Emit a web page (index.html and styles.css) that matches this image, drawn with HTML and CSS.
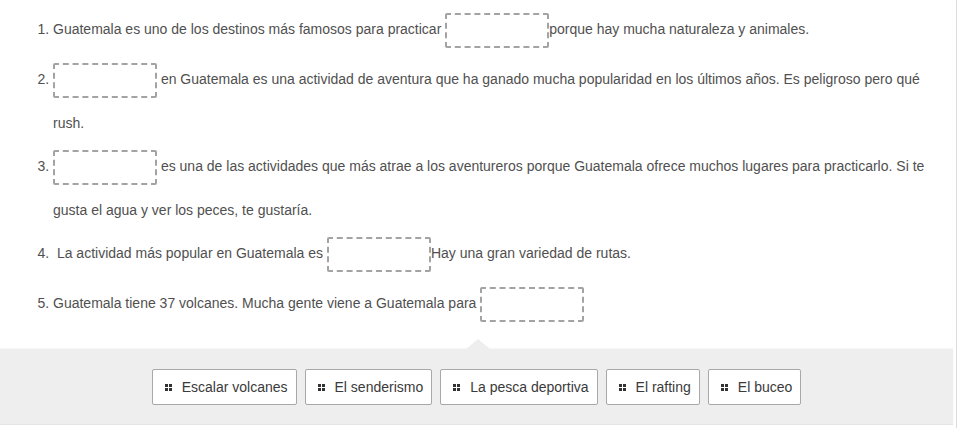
FILE: index.html
```html
<!DOCTYPE html>
<html lang="es">
<head>
<meta charset="utf-8">
<title>Drag the words</title>
<link rel="stylesheet" href="styles.css">
</head>
<body>
<div class="task">
  <ol class="questions">
    <li>Guatemala es uno de los destinos más famosos para practicar <span class="zone"></span>porque hay mucha naturaleza y animales.</li>
    <li><span class="zone"></span> en Guatemala es una actividad de aventura que ha ganado mucha popularidad en los últimos años. Es peligroso pero qué rush.</li>
    <li><span class="zone"></span> es una de las actividades que más atrae a los aventureros porque Guatemala ofrece muchos lugares para practicarlo. Si te gusta el agua y ver los peces, te gustaría.</li>
    <li>&nbsp;La actividad más popular en Guatemala es <span class="zone"></span>Hay una gran variedad de rutas.</li>
    <li>Guatemala tiene 37 volcanes. Mucha gente viene a Guatemala para <span class="zone"></span></li>
  </ol>
  <div class="bank">
    <div class="word"><span class="grip"><i></i><i></i><i></i><i></i></span>Escalar volcanes</div>
    <div class="word"><span class="grip"><i></i><i></i><i></i><i></i></span>El senderismo</div>
    <div class="word"><span class="grip"><i></i><i></i><i></i><i></i></span>La pesca deportiva</div>
    <div class="word"><span class="grip"><i></i><i></i><i></i><i></i></span>El rafting</div>
    <div class="word"><span class="grip"><i></i><i></i><i></i><i></i></span>El buceo</div>
  </div>
</div>
</body>
</html>
```

FILE: styles.css
```css
html, body {
  margin: 0;
  padding: 0;
  background: #fff;
}
body {
  font-family: "Liberation Sans", Arial, sans-serif;
  font-size: 14px;
  color: #505050;
  overflow: hidden;
}
.task {
  width: 957px;
  height: 428px;
  border-right: 1px solid #dcdcdc;
  box-sizing: border-box;
  padding-top: 8px;
}
.questions {
  margin: 0;
  padding: 0 20px 0 53px;
  width: 884px;
}
.questions li {
  line-height: 43.5px;
  min-height: 50px;
}
.zone {
  display: inline-block;
  width: 100px;
  height: 31px;
  border: 2px dashed #a3a3a3;
  border-radius: 2px;
  vertical-align: middle;
  background: #fff;
}
.bank {
  position: relative;
  margin: 17px 3px 0 0;
  height: 76px;
  background: #eeeeee;
  border-bottom: 1px solid #e4e4e4;
  box-shadow: 0 -1px 2px rgba(0, 0, 0, 0.04);
  display: flex;
  justify-content: center;
  align-items: flex-start;
  gap: 8px;
  padding-top: 20px;
  box-sizing: border-box;
}
.bank::before {
  content: "";
  position: absolute;
  left: 466px;
  top: -10px;
  border-left: 12px solid transparent;
  border-right: 12px solid transparent;
  border-bottom: 10px solid #eeeeee;
}
.word {
  display: flex;
  align-items: center;
  height: 34px;
  padding: 0 8px 0 12px;
  background: #fff;
  border: 1px solid #a8a8a8;
  border-radius: 2px;
  color: #3a3a3a;
  font-size: 14px;
  white-space: nowrap;
}
.grip {
  display: grid;
  grid-template-columns: 3px 3px;
  gap: 1px;
  margin-right: 10px;
}
.grip i {
  display: block;
  width: 3px;
  height: 3px;
  background: #333;
}
```
